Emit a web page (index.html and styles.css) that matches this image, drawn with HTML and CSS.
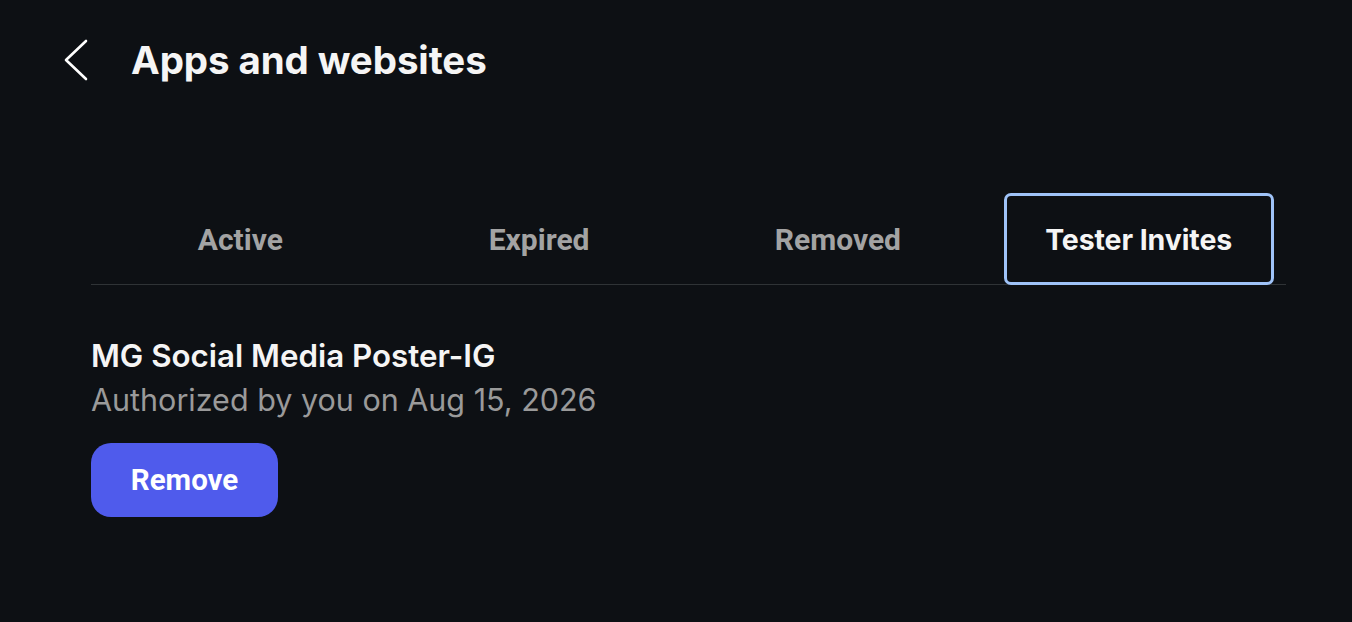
FILE: index.html
```html
<!DOCTYPE html>
<html>
<head>
<meta charset="utf-8">
<link rel="stylesheet" href="styles.css">
</head>
<body>
<div class="page">
  <header class="header">
    <button class="back" aria-label="Back">
      <svg width="26" height="42" viewBox="0 0 26 42"><path d="M23 2 L3 21 L23 40" fill="none" stroke="#ffffff" stroke-width="2.6" stroke-linecap="round" stroke-linejoin="round"/></svg>
    </button>
    <h1 class="title">Apps and websites</h1>
  </header>
  <main class="main">
    <nav class="tabs">
      <div class="tab">Active</div>
      <div class="tab">Expired</div>
      <div class="tab">Removed</div>
      <div class="tab tab-selected"><span class="tab-focus">Tester Invites</span></div>
    </nav>
    <section class="item">
      <div class="item-name">MG Social Media Poster-IG</div>
      <div class="item-meta">Authorized by you on Aug 15, 2026</div>
      <button class="remove">Remove</button>
    </section>
  </main>
</div>
</body>
</html>
```
FILE: styles.css
```css
html, body {
  margin: 0;
  padding: 0;
  background: #0d1014;
  height: 100%;
}
body {
  font-family: Inter, "Noto Sans", sans-serif;
  color: #f5f5f5;
}
.page {
  padding: 38px 66px 0 63px;
}
.header {
  display: flex;
  align-items: center;
  height: 44px;
}
.back {
  background: none;
  border: none;
  padding: 0;
  width: 26px;
  height: 42px;
  display: flex;
  align-items: center;
  cursor: pointer;
}
.title {
  margin: 0 0 0 42px;
  font-size: 38.5px;
  font-weight: 700;
  letter-spacing: -0.1px;
  line-height: 44px;
  color: #f5f5f5;
}
.main {
  padding-left: 28px;
  margin-top: 112px;
}
.tabs {
  display: grid;
  grid-template-columns: repeat(4, 1fr);
  border-bottom: 1px solid #2f3336;
  height: 90px;
}
.tab {
  display: flex;
  align-items: center;
  justify-content: center;
  font-family: Roboto, sans-serif;
  font-weight: 700;
  font-size: 30px;
  color: #a3a3a3;
  height: 90px;
}
.tab-selected {
  font-family: Inter, sans-serif;
  color: #f5f5f5;
  font-size: 28.5px;
  letter-spacing: -0.1px;
}
.tab-focus {
  display: flex;
  align-items: center;
  justify-content: center;
  box-sizing: border-box;
  width: 270px;
  height: 92px;
  margin-top: 0;
  margin-left: 4px;
  border: 3px solid #9fc3f8;
  border-radius: 7px;
}
.item {
  padding-top: 51px;
}
.item-name {
  font-size: 31.3px;
  font-weight: 600;
  line-height: 40px;
  color: #f5f5f5;
}
.item-meta {
  font-size: 30.5px;
  font-weight: 400;
  line-height: 40px;
  margin-top: 4px;
  color: #9a9a9a;
}
.remove {
  margin-top: 23px;
  width: 187px;
  height: 74px;
  border: none;
  border-radius: 20px;
  background: #4f5bec;
  color: #ffffff;
  font-family: Roboto, sans-serif;
  font-weight: 700;
  font-size: 29.5px;
  cursor: pointer;
}
```
